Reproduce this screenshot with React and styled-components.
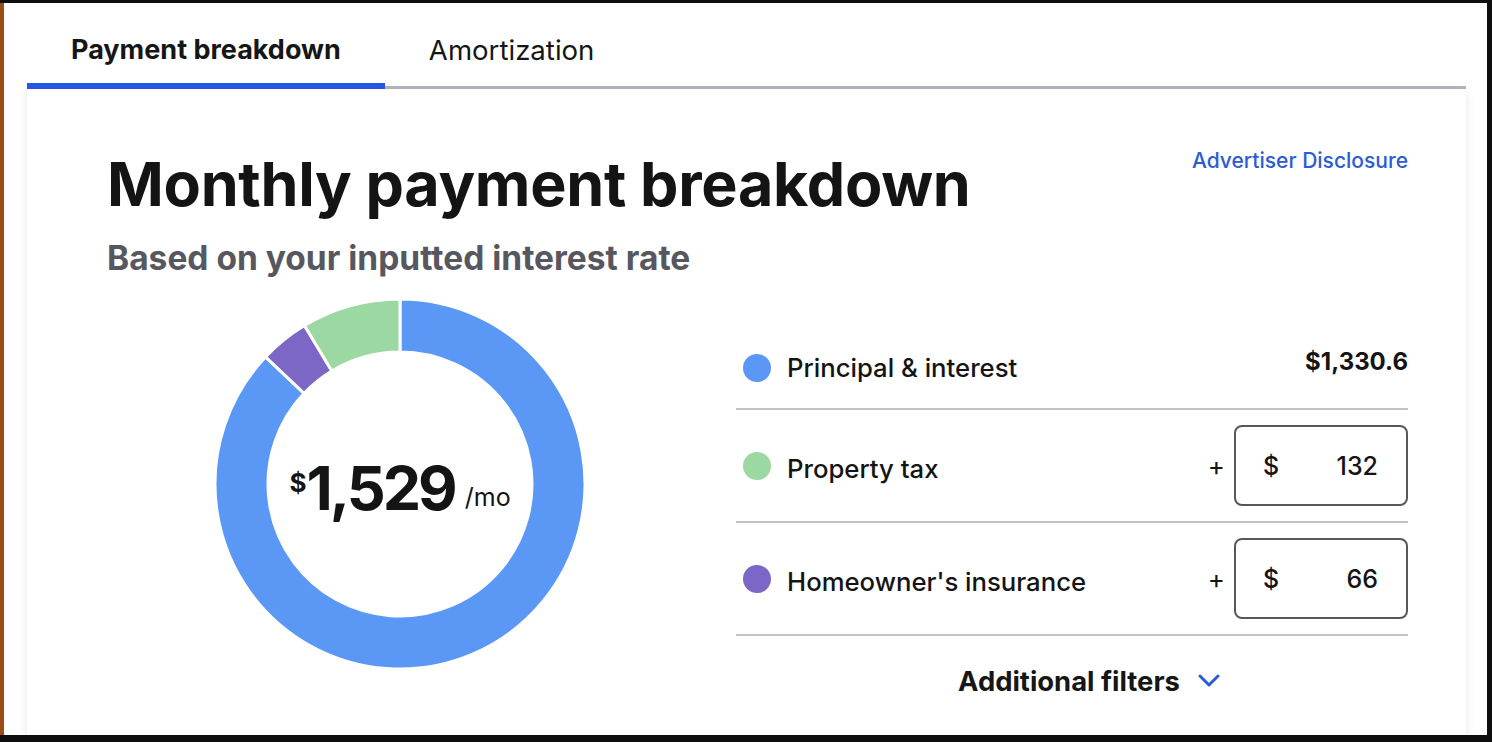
import React, { useState } from 'react'
import styled, { createGlobalStyle } from 'styled-components'

const GlobalStyle = createGlobalStyle`
  html, body {
    margin: 0;
    padding: 0;
    background: #0e0e0e;
    overflow: hidden;
  }
  * {
    box-sizing: border-box;
  }
`

const Frame = styled.div`
  margin-top: 3px;
  height: 732px;
  width: 1487px;
  background: #fff;
  border-left: 4px solid #9c4d17;
  padding: 0 21px 0 23px;
  overflow: hidden;
  font-family: Inter, 'Liberation Sans', sans-serif;
  color: #141414;
`

const TabList = styled.div`
  display: flex;
  box-shadow: inset 0 -3px 0 #b4b6be;
`

const Tab = styled.button`
  background: none;
  border: 0;
  border-bottom: 6px solid ${(p) => (p.$active ? '#2457e2' : 'transparent')};
  padding: 27px 44px 13px;
  line-height: 40px;
  font-family: inherit;
  font-size: ${(p) => (p.$active ? '27px' : '27.6px')};
  font-weight: ${(p) => (p.$active ? 700 : 400)};
  color: #161616;
  cursor: pointer;
`

const Card = styled.section`
  background: #fff;
  border-radius: 0 8px 0 0;
  box-shadow: 0 2px 10px rgba(0, 0, 0, 0.1);
  padding: 57px 58px 60px 80px;
  min-height: 700px;
`

const Header = styled.div`
  display: flex;
  justify-content: space-between;
  align-items: flex-start;
`

const Title = styled.h1`
  margin: 0;
  font-size: 61px;
  line-height: 76px;
  font-weight: 700;
  letter-spacing: -0.3px;
`

const Disclosure = styled.a`
  margin-top: 2px;
  font-size: 21px;
  font-weight: 500;
  color: #2b5cd6;
  text-decoration: none;
`

const Subtitle = styled.h2`
  margin: 16px 0 0;
  font-size: 33.5px;
  line-height: 40px;
  font-weight: 700;
  color: #57575f;
`

const Body = styled.div`
  display: grid;
  grid-template-columns: 586px 1fr;
  gap: 43px;
  margin-top: 21px;
`

const ChartBox = styled.div`
  position: relative;
  width: 370px;
  height: 370px;
  justify-self: center;
`

const Center = styled.div`
  position: absolute;
  inset: 0;
  display: flex;
  align-items: center;
  justify-content: center;
  padding-top: 8px;
`

const Dollar = styled.span`
  font-size: 26px;
  font-weight: 700;
  align-self: flex-start;
  margin-top: 160px;
`

const Amount = styled.span`
  font-size: 61px;
  font-weight: 700;
  letter-spacing: -3px;
`

const Per = styled.span`
  font-size: 25px;
  margin-left: 10px;
  margin-top: 18px;
`

const List = styled.div`
  display: flex;
  flex-direction: column;
`

const Row = styled.div`
  display: flex;
  align-items: center;
  gap: 16px;
  padding: ${(p) => p.$pad || '15px 0'};
  border-bottom: 2px solid #c3c3c7;
`

const Dot = styled.span`
  width: 28px;
  height: 28px;
  border-radius: 50%;
  background: ${(p) => p.$color};
  margin-left: 7px;
  flex: none;
`

const Label = styled.span`
  flex: 1;
  font-size: 25.7px;
  font-weight: 500;
  padding-top: ${(p) => (p.$nudge ? '6px' : '0')};
`

const Value = styled.span`
  font-size: 24px;
  font-weight: 700;
  align-self: flex-start;
  margin-top: -5px;
`

const Plus = styled.span`
  font-size: 26px;
  margin-right: -7px;
`

const MoneyInput = styled.label`
  display: flex;
  align-items: center;
  justify-content: space-between;
  width: 174px;
  height: 81px;
  border: 2px solid #58585c;
  border-radius: 8px;
  padding: 0 28px 0 27px;
  font-size: 25px;
  font-weight: 500;
`

const Filters = styled.button`
  display: flex;
  align-items: center;
  justify-content: center;
  gap: 18px;
  margin-top: 27px;
  padding-left: 40px;
  background: none;
  border: 0;
  font-family: inherit;
  font-size: 27.4px;
  font-weight: 700;
  color: #161616;
  cursor: pointer;
`

const segments = [
  { color: '#5b98f6', value: 1330.6 },
  { color: '#7c66c6', value: 66 },
  { color: '#9bd8a2', value: 132 },
]

function polar(r, deg) {
  const a = ((deg - 90) * Math.PI) / 180
  return [185 + r * Math.cos(a), 185 + r * Math.sin(a)]
}

function sector(start, end, ro, ri) {
  const large = end - start > 180 ? 1 : 0
  const [x1, y1] = polar(ro, start)
  const [x2, y2] = polar(ro, end)
  const [x3, y3] = polar(ri, end)
  const [x4, y4] = polar(ri, start)
  return `M${x1} ${y1} A${ro} ${ro} 0 ${large} 1 ${x2} ${y2} L${x3} ${y3} A${ri} ${ri} 0 ${large} 0 ${x4} ${y4} Z`
}

function Donut() {
  const total = segments.reduce((s, x) => s + x.value, 0)
  let angle = 0
  return (
    <svg width="370" height="370" viewBox="0 0 370 370">
      {segments.map((s) => {
        const start = angle
        angle += (s.value / total) * 360
        return (
          <path
            key={s.color}
            d={sector(start, angle, 185, 132)}
            fill={s.color}
            stroke="#fff"
            strokeWidth="3"
          />
        )
      })}
    </svg>
  )
}

function Chevron() {
  return (
    <svg width="22" height="14" viewBox="0 0 22 14">
      <path d="M2 2l9 9 9-9" fill="none" stroke="#2b5cd6" strokeWidth="3" strokeLinecap="round" strokeLinejoin="round" />
    </svg>
  )
}

export default function App() {
  const [tab, setTab] = useState('payment')
  return (
    <Frame>
      <GlobalStyle />
      <TabList>
        <Tab $active={tab === 'payment'} onClick={() => setTab('payment')}>
          Payment breakdown
        </Tab>
        <Tab $active={tab === 'amort'} onClick={() => setTab('amort')}>
          Amortization
        </Tab>
      </TabList>
      <Card>
        <Header>
          <div>
            <Title>Monthly payment breakdown</Title>
            <Subtitle>Based on your inputted interest rate</Subtitle>
          </div>
          <Disclosure href="#">Advertiser Disclosure</Disclosure>
        </Header>
        <Body>
          <ChartBox>
            <Donut />
            <Center>
              <Dollar>$</Dollar>
              <Amount>1,529</Amount>
              <Per>/mo</Per>
            </Center>
          </ChartBox>
          <List>
            <Row $pad="53px 0 25px">
              <Dot $color="#5b98f6" />
              <Label>Principal &amp; interest</Label>
              <Value>$1,330.6</Value>
            </Row>
            <Row>
              <Dot $color="#9bd8a2" />
              <Label $nudge>Property tax</Label>
              <Plus>+</Plus>
              <MoneyInput>
                <span>$</span>
                <span>132</span>
              </MoneyInput>
            </Row>
            <Row>
              <Dot $color="#7c66c6" />
              <Label $nudge>Homeowner's insurance</Label>
              <Plus>+</Plus>
              <MoneyInput>
                <span>$</span>
                <span>66</span>
              </MoneyInput>
            </Row>
            <Filters>
              Additional filters
              <Chevron />
            </Filters>
          </List>
        </Body>
      </Card>
    </Frame>
  )
}
